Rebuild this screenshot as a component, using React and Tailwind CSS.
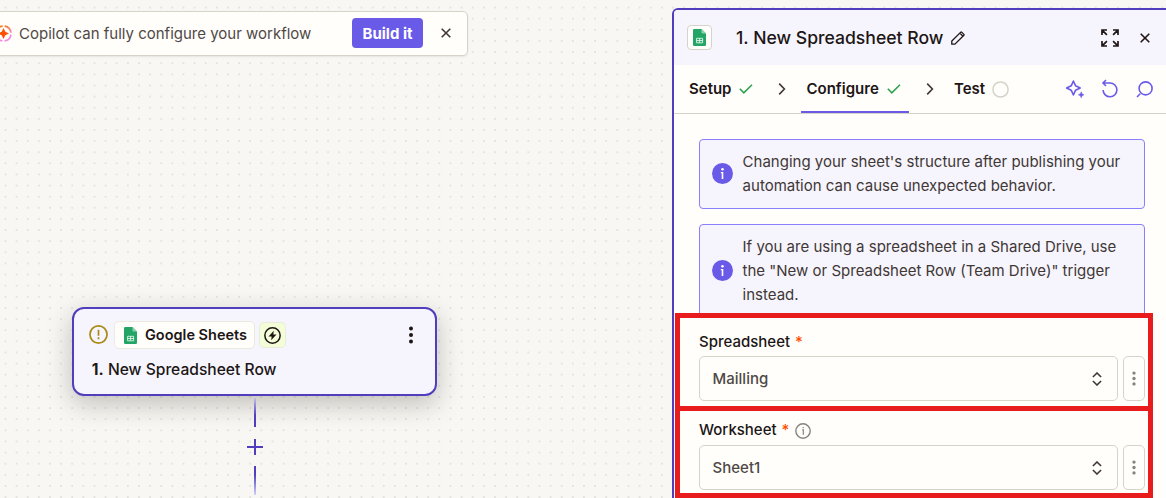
import React from "react";

const SheetIcon = ({ className }) => (
  <svg viewBox="0 0 13 17" className={className}>
    <path d="M1.2 0H8.5L13 4.5V15.8Q13 17 11.8 17H1.2Q0 17 0 15.8V1.2Q0 0 1.2 0Z" fill="#23a566" />
    <path d="M8.5 0L13 4.5H9.7Q8.5 4.5 8.5 3.3Z" fill="#8ed1b1" />
    <path d="M3.6 9.3H9.6V13.8H3.6Z M6.6 9.3V13.8 M3.6 11.55H9.6" fill="none" stroke="#e4f5ec" strokeWidth="0.9" />
  </svg>
);

const CopilotIcon = () => (
  <svg viewBox="0 0 17 17" className="h-[17px] w-[17px] shrink-0">
    <defs>
      <linearGradient id="ring" x1="0" y1="0" x2="0.4" y2="1">
        <stop offset="0.2" stopColor="#ff7a1a" />
        <stop offset="0.85" stopColor="#f48be0" />
      </linearGradient>
    </defs>
    <circle cx="8.5" cy="8.5" r="7.5" fill="none" stroke="url(#ring)" strokeWidth="1.7" strokeDasharray="9.6 2.18" strokeDashoffset="-1.1" />
    <path d="M8.5 3L10.3 6.7L14 8.5L10.3 10.3L8.5 14L6.7 10.3L3 8.5L6.7 6.7Z" fill="#ff4f00" />
  </svg>
);

const CloseIcon = ({ className }) => (
  <svg viewBox="0 0 10 10" className={className} fill="none" stroke="currentColor" strokeWidth="1.6">
    <path d="M0.7 0.7L9.3 9.3M9.3 0.7L0.7 9.3" />
  </svg>
);

const Check = () => (
  <svg viewBox="0 0 14 10" className="h-[10px] w-[14px]" fill="none" stroke="#2da44e" strokeWidth="1.6">
    <path d="M0.8 4.8L4.8 8.8L13 0.8" />
  </svg>
);

const Chevron = () => (
  <svg viewBox="0 0 8 12" className="h-[12px] w-[8px]" fill="none" stroke="#413735" strokeWidth="1.6">
    <path d="M1.2 0.6L6.4 6L1.2 11.4" />
  </svg>
);

const Dots = ({ className }) => (
  <svg viewBox="0 0 4 18" className={className} fill="currentColor">
    <circle cx="2" cy="2.5" r="2" />
    <circle cx="2" cy="9" r="2" />
    <circle cx="2" cy="15.5" r="2" />
  </svg>
);

const InfoBadge = () => (
  <svg viewBox="0 0 21 21" className="mb-[2px] h-[21px] w-[21px] shrink-0">
    <circle cx="10.5" cy="10.5" r="10.5" fill="#695be8" />
    <circle cx="10.5" cy="6.2" r="1.3" fill="#fff" />
    <path d="M8.8 8.9H11.3V15.9H9.7V10.2H8.8Z" fill="#fff" />
  </svg>
);

const Notice = ({ children }) => (
  <div className="flex items-center gap-[9.6px] rounded-[4px] border border-[#8a80fb] bg-[#f6f5fd] py-[10px] pl-[12px] text-[15px] leading-[24px] text-[#413735]">
    <InfoBadge />
    <p className="whitespace-nowrap">{children}</p>
  </div>
);

const Field = ({ label, value, info }) => (
  <div>
    <div className={info ? "flex h-[27px] items-center pb-[2px] text-[15px] font-medium text-[#201515]" : "flex h-[27px] items-center text-[15px] font-medium text-[#201515]"}>
      {label}
      <span className="ml-[5px] text-[#ff4f00]">*</span>
      {info && (
        <svg viewBox="0 0 16 16" className="ml-[6px] h-[16px] w-[16px]" fill="none" stroke="#88827e" strokeWidth="1.4">
          <circle cx="8" cy="8" r="7.2" />
          <path d="M7.2 6.8H8.3V11.8M8.2 3.9V5.3" strokeWidth="1.2" />
        </svg>
      )}
    </div>
    <div className="flex gap-[5px]">
      <div className="flex h-[45px] w-[419px] items-center justify-between rounded-[5px] border border-[#d7d3c9] pr-[15px] pl-[12.6px] text-[15px] font-medium text-[#504845]">
        <span className="pt-[2px]">{value}</span>
        <svg viewBox="0 0 10 14" className="h-[14px] w-[10px]" fill="none" stroke="#413735" strokeWidth="1.6">
          <path d="M0.9 5L5 1L9.1 5M0.9 9L5 13L9.1 9" />
        </svg>
      </div>
      <div className="flex h-[45px] w-[22px] items-center justify-center rounded-[5px] border border-[#d7d3c9] text-[#88827e]">
        <Dots className="h-[15px] w-[4px]" />
      </div>
    </div>
  </div>
);

const Canvas = () => (
  <div className="w-[672px] shrink-0 overflow-hidden">
    <div className="mt-[11px] -ml-[20px] flex h-[45px] w-[488px] items-center rounded-r-[5px] border border-[#d7d3c9] bg-[#fffefb] pb-[1px] pl-[14px] shadow-[0_1px_2px_rgba(0,0,0,0.08)]">
      <CopilotIcon />
      <span className="ml-[7px] w-[333px] pt-[2px] text-[15px] whitespace-nowrap text-[#504845]">Copilot can fully configure your workflow</span>
      <button className="h-[30px] w-[71px] shrink-0 rounded-[4px] bg-[#695be8] pt-[2px] text-[15px] font-bold whitespace-nowrap text-white">Build it</button>
      <CloseIcon className="ml-[18px] h-[10px] w-[10px] text-[#413735]" />
    </div>

    <div className="mt-[251px] ml-[72px] h-[89px] w-[365px] rounded-[12px] border-2 border-[#503ebd] bg-[#f6f5fd] pt-[12px] pl-[15px] text-[15px] text-[#201515] shadow-[0_8px_26px_rgba(30,25,15,0.25)]">
      <div className="flex h-[28px] items-center">
        <svg viewBox="0 0 20 20" className="mb-px h-[19px] w-[19px]" fill="none" stroke="#a98a14" strokeWidth="1.8">
          <circle cx="10" cy="10" r="9" />
          <path d="M10 5V11.3M10 13V15" />
        </svg>
        <div className="ml-[6px] flex h-[28px] w-[141px] items-center gap-[8px] rounded-[5px] border border-[#ece9df] bg-[#fffefb] pl-[9px] text-[14.5px] font-semibold whitespace-nowrap">
          <SheetIcon className="h-[17px] w-[13px] shrink-0" />
          Google Sheets
        </div>
        <div className="ml-[4px] flex h-[26px] w-[27px] items-center justify-center rounded-[5px] border border-[#e9ecd8] bg-[#f3fdd8]">
          <svg viewBox="0 0 18 18" className="mr-px h-[17px] w-[17px]">
            <circle cx="9" cy="9" r="8.1" fill="none" stroke="#201515" strokeWidth="1.6" />
            <path d="M10.3 4L4.8 10H8.1L7.6 14L13.2 8H9.9Z" fill="#201515" />
          </svg>
        </div>
        <Dots className="ml-[123px] h-[18px] w-[4px]" />
      </div>
      <div className="mt-[9px] pl-[2.8px] text-[15.6px] leading-[24px] font-medium"><span className="font-bold">1.</span> New Spreadsheet Row</div>
    </div>

    <div className="ml-[247px] flex w-[16px] flex-col items-center pt-[2px]">
      <div className="h-[29px] w-[2px] bg-linear-to-b from-[#c5bfe8] to-[#503ebd] to-60%" />
      <svg viewBox="0 0 16 16" className="mt-[12px] h-[16px] w-[16px]" stroke="#503ebd" strokeWidth="2">
        <path d="M0 8H16M8 0V16" />
      </svg>
      <div className="mt-[11px] h-[29px] w-[2px] bg-linear-to-b from-[#503ebd] from-30% to-[#d5d0f5]" />
    </div>
  </div>
);

const Panel = () => (
  <div className="relative mt-[8px] h-[490px] w-[494px] shrink-0 rounded-tl-[6px] border-t-2 border-l-2 border-[#503ebd] bg-[#fffefb] text-[#201515]">
    <div className="flex h-[55px] items-center rounded-tl-[4px] bg-[#f6f5fd] pl-[13px]">
      <div className="flex h-[25px] w-[25px] items-center justify-center rounded-[4px] border border-[#d7d3c9] bg-[#fffefb]">
        <SheetIcon className="h-[17px] w-[13px]" />
      </div>
      <span className="ml-[24px] w-[215px] pt-[2px] text-[17.6px] font-medium whitespace-nowrap">1. New Spreadsheet Row</span>
      <svg viewBox="0 0 14 14" className="h-[14px] w-[14px]" fill="none" stroke="#201515" strokeWidth="1.3">
        <path d="M0.8 13.2V10.1L9.8 1.1Q10.2 0.7 10.6 1.1L12.9 3.4Q13.3 3.8 12.9 4.2L3.9 13.2Z M8.8 2.1L11.5 4.8" />
      </svg>
      <svg viewBox="0 0 18 18" className="ml-[136px] h-[18px] w-[18px]" fill="none" stroke="#201515" strokeWidth="1.7">
        <path d="M1 6V1H6M1.4 1.4L5.9 5.9M12 1H17V6M16.6 1.4L12.1 5.9M1 12V17H6M1.4 16.6L5.9 12.1M12 17H17V12M16.6 16.6L12.1 12.1" />
      </svg>
      <CloseIcon className="ml-[21px] h-[10px] w-[10px]" />
    </div>

    <div className="flex h-[49px] items-stretch border-b border-[#d7d3c9] pl-[15px] text-[15px] font-semibold">
      <div className="flex w-[64px] items-center justify-between">Setup<Check /></div>
      <div className="ml-[25px] flex items-center"><Chevron /></div>
      <div className="ml-[15px] flex w-[108px] items-center justify-between border-b-2 border-[#695be8] pt-[2px] pr-[8px] pl-[5.5px]">Configure<Check /></div>
      <div className="ml-[17px] flex items-center"><Chevron /></div>
      <div className="ml-[20px] flex w-[55px] items-center justify-between">
        Test
        <svg viewBox="0 0 17 17" className="h-[17px] w-[17px]" fill="none" stroke="#d7d3c9" strokeWidth="1.5">
          <circle cx="8.5" cy="8.5" r="7.6" />
        </svg>
      </div>
      <div className="ml-[56px] flex items-center gap-[17px] text-[#695be8]">
        <svg viewBox="0 0 19 19" className="mb-px h-[19px] w-[19px]" fill="none" stroke="currentColor" strokeWidth="1.6">
          <path d="M8.4 2L10.6 6.8L15.2 9L10.6 11.2L8.4 16L6.2 11.2L1.6 9L6.2 6.8Z" strokeLinejoin="round" />
          <path d="M16.2 12.8L17.1 14.9L19 15.8L17.1 16.7L16.2 18.8L15.3 16.7L13.3 15.8L15.3 14.9Z" fill="currentColor" stroke="currentColor" strokeWidth="0.5" />
        </svg>
        <svg viewBox="0 0 17 19" className="mb-px h-[19px] w-[17px]" fill="none" stroke="currentColor" strokeWidth="1.6">
          <path d="M2 4H9A6.9 6.9 0 1 1 2.1 11M5 1L2 4L5 7" />
        </svg>
        <svg viewBox="0 0 17 17" className="ml-[1px] h-[17px] w-[17px]" fill="none" stroke="currentColor" strokeWidth="1.6">
          <circle cx="9.6" cy="7.4" r="6.5" />
          <path d="M4.2 12.8L1 16" />
        </svg>
      </div>
    </div>

    <div className="flex w-[471px] flex-col pt-[25px] pl-[25px]">
      <Notice>
        Changing your sheet's structure after publishing your<br />automation can cause unexpected behavior.
      </Notice>
      <div className="mt-[15px]">
        <Notice>
          If you are using a spreadsheet in a Shared Drive, use<br />the "New or Spreadsheet Row (Team Drive)" trigger<br />instead.
        </Notice>
      </div>
      <div className="mt-[11px] flex flex-col gap-[17px]">
        <Field label="Spreadsheet" value="Mailling" />
        <Field label="Worksheet" value="Sheet1" info />
      </div>
    </div>

    <div className="absolute top-[303px] left-[1px] h-[98px] w-[478px] border-5 border-[#e81c1c]" />
    <div className="absolute top-[396px] left-[1px] h-[92px] w-[478px] border-5 border-[#e81c1c]" />
  </div>
);

export default function App() {
  return (
    <div className="flex h-[498px] w-[1166px] overflow-hidden bg-[#f8f7f3] bg-[radial-gradient(circle_at_center,#e5e3dd_0.7px,transparent_1px)] bg-[length:11.13px_11.13px] bg-[position:-0.1px_2px] font-['Inter',sans-serif]">
      <Canvas />
      <Panel />
    </div>
  );
}
